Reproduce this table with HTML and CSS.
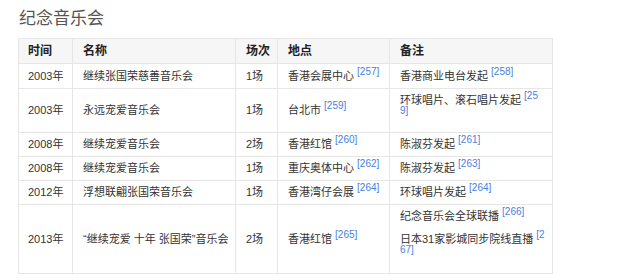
FILE: index.html
```html
<!DOCTYPE html>
<html lang="zh-CN">
<head>
<meta charset="utf-8">
<title>纪念音乐会</title>
<link rel="stylesheet" href="styles.css">
</head>
<body>
<h2 class="title">纪念音乐会</h2>
<table class="concerts">
  <colgroup>
    <col class="c-time"><col class="c-name"><col class="c-count"><col class="c-place"><col class="c-note">
  </colgroup>
  <thead>
    <tr><th>时间</th><th>名称</th><th>场次</th><th>地点</th><th>备注</th></tr>
  </thead>
  <tbody>
    <tr class="r1">
      <td>2003年</td><td>继续张国荣慈善音乐会</td><td>1场</td>
      <td>香港会展中心 <sup>[257]</sup></td>
      <td>香港商业电台发起 <sup>[258]</sup></td>
    </tr>
    <tr>
      <td>2003年</td><td>永远宠爱音乐会</td><td>1场</td>
      <td>台北市 <sup>[259]</sup></td>
      <td class="note"><p class="tight">环球唱片、滚石唱片发起 <sup>[25<br>9]</sup></p></td>
    </tr>
    <tr>
      <td>2008年</td><td>继续宠爱音乐会</td><td>2场</td>
      <td>香港红馆 <sup>[260]</sup></td>
      <td>陈淑芬发起 <sup>[261]</sup></td>
    </tr>
    <tr>
      <td>2008年</td><td>继续宠爱音乐会</td><td>1场</td>
      <td>重庆奥体中心 <sup>[262]</sup></td>
      <td>陈淑芬发起 <sup>[263]</sup></td>
    </tr>
    <tr>
      <td>2012年</td><td>浮想联翩张国荣音乐会</td><td>1场</td>
      <td>香港湾仔会展 <sup>[264]</sup></td>
      <td>环球唱片发起 <sup>[264]</sup></td>
    </tr>
    <tr>
      <td>2013年</td><td>“继续宠爱 十年 张国荣”音乐会</td><td>2场</td>
      <td>香港红馆 <sup>[265]</sup></td>
      <td class="note">
        <p>纪念音乐会全球联播 <sup>[266]</sup></p>
        <p>日本31家影城同步院线直播 <sup>[2<br>67]</sup></p>
      </td>
    </tr>
  </tbody>
</table>
</body>
</html>
```

FILE: styles.css
```css
html, body {
  margin: 0;
  padding: 0;
  background: #fff;
}
body {
  padding: 0 18px;
  font-family: "Liberation Sans", "Noto Sans CJK SC", sans-serif;
  color: #333;
}
.title {
  margin: 8px 0 8px 1px;
  font-size: 17px;
  line-height: 22px;
  font-weight: normal;
  color: #555;
}
.concerts {
  border-collapse: collapse;
  table-layout: fixed;
  width: 535px;
  font-size: 11px;
  line-height: 15px;
}
.c-time { width: 54px; }
.c-name { width: 163px; }
.c-count { width: 42px; }
.c-place { width: 112px; }
.c-note { width: 163px; }
.concerts th,
.concerts td {
  border: 1px solid #e6e6e6;
  padding: 4px 0 4px 10px;
  text-align: left;
  vertical-align: middle;
  white-space: nowrap;
  overflow: visible;
}
.concerts th {
  background: #f6f6f6;
  font-size: 12px;
  font-weight: bold;
  color: #222;
  padding-top: 5px;
}
.concerts td:first-child,
.concerts th:first-child {
  padding-left: 9px;
}
.concerts .r1 td {
  padding-top: 5px;
}
.concerts td.note {
  vertical-align: top;
}
.note p {
  margin: 0 0 7.5px;
}
.note p.tight {
  margin-bottom: 5px;
}
sup {
  font-size: 10px;
  line-height: 0;
  vertical-align: 5px;
  color: #4a80dc;
}
```
